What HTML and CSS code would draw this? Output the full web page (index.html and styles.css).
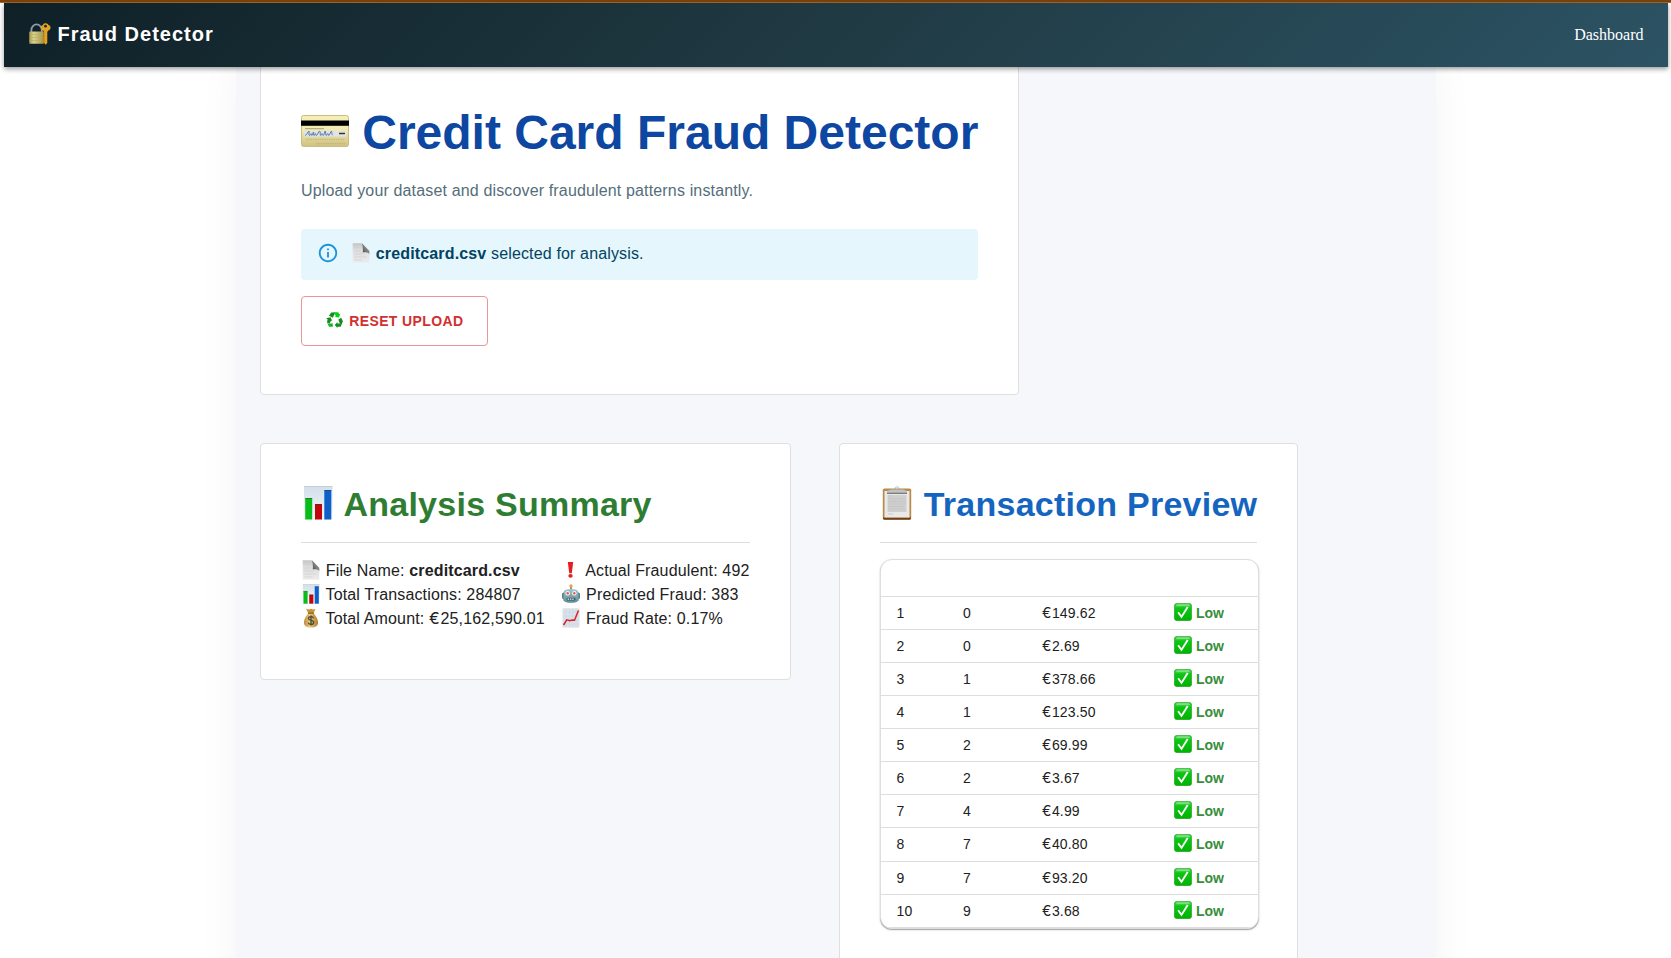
FILE: index.html
```html
<!DOCTYPE html>
<html lang="en">
<head>
<meta charset="utf-8">
<title>Fraud Detector</title>
<link rel="stylesheet" href="styles.css">
</head>
<body>
<svg class="defs" width="0" height="0" aria-hidden="true">
  <defs>
    <linearGradient id="brass" x1="0" x2="1" y1="0" y2="0"><stop offset="0" stop-color="#a69a4c"/><stop offset=".3" stop-color="#d9d28c"/><stop offset="1" stop-color="#a3944a"/></linearGradient>
    <linearGradient id="cream" x1="0" x2="0" y1="0" y2="1"><stop offset="0" stop-color="#f6f0b6"/><stop offset=".5" stop-color="#efe8b4"/><stop offset="1" stop-color="#cfc07c"/></linearGradient>
    <linearGradient id="sheet" x1="0" x2="0" y1="0" y2="1"><stop offset="0" stop-color="#c4c4c4"/><stop offset=".3" stop-color="#dcdcdc"/><stop offset="1" stop-color="#ececec"/></linearGradient>
    <linearGradient id="fold" x1="0" x2="1" y1="1" y2="0"><stop offset="0" stop-color="#444"/><stop offset="1" stop-color="#bbb"/></linearGradient>
    <linearGradient id="panel" x1="0" x2="0" y1="0" y2="1"><stop offset="0" stop-color="#d3dfea"/><stop offset="1" stop-color="#f4f7fa"/></linearGradient>
    <linearGradient id="tick" x1="0" x2="0" y1="0" y2="1"><stop offset="0" stop-color="#4bd84b"/><stop offset=".3" stop-color="#0cc414"/><stop offset="1" stop-color="#00b400"/></linearGradient>
    <linearGradient id="metal" x1="0" x2="0" y1="0" y2="1"><stop offset="0" stop-color="#9fc6d0"/><stop offset="1" stop-color="#5f8c98"/></linearGradient>
    <linearGradient id="sack" x1="0" x2="1" y1="0" y2="0"><stop offset="0" stop-color="#b98a3c"/><stop offset=".4" stop-color="#ecc878"/><stop offset="1" stop-color="#b07c2c"/></linearGradient>
  </defs>
  <symbol id="i-lock" viewBox="0 0 22 22">
    <path d="M2.400 9.500V7a5.200 5.600 0 0 1 10.400 0v2.500" fill="none" stroke="#8d9bab" stroke-width="1.800"/>
    <rect x=".3" y="8.600" width="14.500" height="12.200" rx=".6" fill="url(#brass)"/>
    <path d="M.3 11.500h14.500M.3 14.500h14.500M.3 17.500h14.500" stroke="#b5a962" stroke-width=".6"/>
    <path d="M16.500.3c1.700 0 2.500.7 3 1.700 1.500.4 2.200 1.500 2 3-.2 1.600-1.200 2.400-2.300 2.600l-.9 1.500v10.800l-1.600 1.800-1.600-1.600V9.100l-.9-1.500c-1.300-.2-2.200-1.100-2.300-2.600-.1-1.500.6-2.600 2-3 .4-1.100 1.200-1.700 2.600-1.700z" fill="#e5a220"/>
    <circle cx="16.500" cy="3.200" r="1.400" fill="#18292f"/>
    <path d="M15.200 14.600h-2v1.600h1v1.300h-1v2.200h2z" fill="#c98612"/>
  </symbol>
  <symbol id="i-card" viewBox="0 0 48 32">
    <rect x=".5" y=".5" width="47" height="31" rx="2" fill="url(#cream)" stroke="#c9bd87"/>
    <rect x="0" y="5.500" width="48" height="5.300" fill="#000"/>
    <path d="M4 13.700h19" stroke="#aaa277" stroke-width="1"/>
    <rect x="3" y="16" width="42" height="5.500" fill="#e2e4e4"/>
    <path d="M4 20.500c2-.5 3.200-4.500 4-4.500s-.8 4.500.3 4.500 1-2 1.700-2 .2 2 1 2 .8-3.500 1.500-3.500-.3 3.500.5 3.500 1-2 1.500-2 0 2 1 2 2-4.500 3-4.500.5 4.500 1.200 4.500.6-2 1.300-2 .5 2 1.300 2 1.400-4.500 2-4.500 0 4.500.8 4.500 1.200-2 1.800-2 .2 2 1 2 1.500-4 2.400-4.300 .2 3.500 1.200 4" fill="none" stroke="#4f79ba" stroke-width="1"/>
    <path d="M38 18.500h6" stroke="#333" stroke-width="1.500"/>
    <path d="M5 24.500h39M15 28.500h30" stroke="#b8ab78" stroke-width="1.600" stroke-dasharray="1.500 .8" opacity=".6"/>
  </symbol>
  <symbol id="i-doc" viewBox="0 0 20 20">
    <path d="M1.700.3h9.200l7.400 8.500v11H1.700z" fill="url(#sheet)"/>
    <path d="M10.900.3l7.400 7.400v3.200c-1.700-1.500-4.300-1.800-6.500-1.400.4-3-.1-6.500-.9-9.200z" fill="url(#fold)"/>
    <path d="M3.500 5h6M3.500 8h6M3.500 11h9M3.500 14h12M3.500 17h8" stroke="#cfcfcf" stroke-width=".7"/>
  </symbol>
  <symbol id="i-info" viewBox="0 0 24 24">
    <path fill="#1b95d8" d="M11 7h2v2h-2zm0 4h2v6h-2zm1-9C6.480 2 2 6.480 2 12s4.480 10 10 10 10-4.480 10-10S17.520 2 12 2zm0 18c-4.410 0-8-3.590-8-8s3.590-8 8-8 8 3.590 8 8-3.590 8-8 8z"/>
  </symbol>
  <symbol id="i-recycle" viewBox="0 0 17 16">
    <path d="M3 3.800L5.200.5h4L6.900 5.800z" fill="#168a20"/><path d="M6.800.3h5.400l1.100 1.900 1.100-.4-1.500 3.700-4.300-.5 1.300-.8L8.600 1.700z" fill="#07cf12"/>
    <path d="M12.300 7.400l3-1.600 1.500 3.400-1.200 2.600h-1.700z" fill="#168a20"/><path d="M16.500 10.200l-1.800 4.600h-3.300v1.200L8.800 13l2.600-3v1.400h3z" fill="#138f1d"/>
    <path d="M.2 6.200l4.300-.9 1.800 3.800-1.200-.5-1.600 3L1 10.500l.6-3.300z" fill="#168a20"/><path d="M.5 9l1.600 2.500h4.700v3.300H3z" fill="#10b91a"/>
  </symbol>
  <symbol id="i-bars" viewBox="0 0 34 34">
    <rect x="3" y=".2" width="28.500" height="33.500" fill="url(#panel)"/>
    <path d="M3 .4h28.500" stroke="#b9c5ce" stroke-width=".8"/>
    <path d="M4.200 12h7v21.500h-7z" fill="#08bd18"/><path d="M14 18h7v15.500h-7z" fill="#c2060c"/><path d="M23.300 4h7v29.500h-7z" fill="#0c60c8"/>
    <path d="M4.200 12.500h7M14 18.500h7M23.300 4.500h7" stroke="#333" stroke-opacity=".45"/>
  </symbol>
  <symbol id="i-money" viewBox="0 0 20 20">
    <path d="M5 .8l3 .8 2-.8 2 .8 2.500-.6-2 4.300H7.300z" fill="#c99338"/>
    <path d="M7.300 5.200h5.400c1.500 2 4.400 5.500 4.400 9.300 0 3.500-2.500 5-7.100 5s-7-1.500-7-5c0-3.800 2.800-7.300 4.300-9.300z" fill="url(#sack)"/>
    <path d="M7 5.200h6" stroke="#8d5b17" stroke-width="1.200"/>
    <path d="M12.600 10.200c-.4-1.200-1.300-1.500-2.600-1.500-1.500 0-2.500.6-2.500 1.800 0 2.700 5.200 1.100 5.200 3.900 0 1.300-1.200 1.900-2.700 1.900s-2.500-.5-2.800-1.700M10 7.500v10" fill="none" stroke="#454a3e" stroke-width="1.300"/>
  </symbol>
  <symbol id="i-bang" viewBox="0 0 20 20"><path d="M6.800 2h5.400l-1.400 11.200H8.200z" fill="#e81c20"/><ellipse cx="9.500" cy="15.900" rx="2.200" ry="1.800" fill="#e81c20"/></symbol>
  <symbol id="i-robot" viewBox="0 0 20 20">
    <path d="M9.200 2.500h1.600V5H9.200z" fill="#777"/><circle cx="10" cy="1.900" r="1.700" fill="#f0a434"/>
    <rect x="1" y="8.500" width="18" height="6.500" rx="1.500" fill="#637d86"/>
    <path d="M3 7c2-2.800 12-2.800 14 0l.8 9c-1.500 3.800-14 3.800-15.600 0z" fill="url(#metal)"/>
    <circle cx="6.700" cy="9.300" r="2.200" fill="#f6fafa"/><circle cx="13.300" cy="9.300" r="2.200" fill="#f6fafa"/>
    <circle cx="6.700" cy="9.300" r="1.200" fill="#e35550"/><circle cx="13.300" cy="9.300" r="1.200" fill="#e35550"/>
    <path d="M10 10.500l1 2H9z" fill="#c85"/><rect x="5.500" y="13.700" width="9" height="2.800" rx="1.200" fill="#385a66"/>
    <path d="M6.600 15.100h6.800" stroke="#e8f2f2" stroke-width="1.300" stroke-dasharray="1.500 .8"/>
  </symbol>
  <symbol id="i-trend" viewBox="0 0 20 20">
    <rect x="1.500" y=".3" width="17" height="19.300" fill="#dbe3ea"/>
    <path d="M4.900.3v19.300M8.300.3v19.300M11.700.3v19.300M15.100.3v19.300M1.500 4h17M1.500 8h17M1.500 12h17M1.500 16h17" stroke="#c3ced8" stroke-width=".4"/>
    <path d="M2.500 17l3.300-5.200 3 1 2.500-.8 2.200.3 4-9.800" fill="none" stroke="#d8232a" stroke-width="1.500"/>
  </symbol>
  <symbol id="i-clip" viewBox="0 0 34 34">
    <circle cx="17" cy="2.800" r="2" fill="none" stroke="#b5bfc8"/>
    <rect x="2.800" y="2.500" width="28.400" height="31" rx="1.800" fill="#b98a48"/><path d="M3 31.500h28v.8a1.500 1.500 0 0 1-1.500 1.500h-25A1.500 1.500 0 0 1 3 32.300z" fill="#724118"/>
    <path d="M4.500 5h25v26.500h-25z" fill="#e9e9e9"/><path d="M7.500 9h19v17h-19z" fill="#cfcfcf"/><path d="M8 10h4M8 13h17M8 15.500h18M8 18h18M8 20.500h16M8 23h17M8 28h5" stroke="#c2c2c2" stroke-width=".7"/>
    <path d="M7 5l4-1.500h12L27 5v2.500H7z" fill="#b9c3cc"/><path d="M7 7.300h20" stroke="#6d6250"/>
  </symbol>
  <symbol id="i-check" viewBox="0 0 18 18">
    <rect x=".3" y=".3" width="17.400" height="17.400" rx="3" fill="url(#tick)" stroke="#2a9b2c" stroke-width=".6"/>
    <path d="M2 3.200Q2 1.200 4 1.200h10q2 0 2 2z" fill="#fff" opacity=".35"/>
    <path d="M4.100 9.300l3.400 4.600L13.700 4" fill="none" stroke="#fff" stroke-width="1.900"/>
  </symbol>
</svg>

<div class="top-strip"></div>
<nav class="navbar">
  <div class="brand"><svg class="ic-lock"><use href="#i-lock"/></svg>Fraud Detector</div>
  <a class="nav-link">Dashboard</a>
</nav>

<main class="container">
  <section class="card upload">
    <h1><svg class="ic-card"><use href="#i-card"/></svg> Credit Card Fraud Detector</h1>
    <p class="subtitle">Upload your dataset and discover fraudulent patterns instantly.</p>
    <div class="alert"><svg class="ic-info"><use href="#i-info"/></svg><span class="message"><svg class="ic"><use href="#i-doc"/></svg> <b>creditcard.csv</b> selected for analysis.</span></div>
    <button class="reset"><svg class="ic-recycle"><use href="#i-recycle"/></svg> RESET UPLOAD</button>
  </section>

  <div class="panels">
    <section class="card summary">
      <h2 class="green"><svg class="ic-h"><use href="#i-bars"/></svg> Analysis Summary</h2>
      <hr>
      <div class="stats">
        <div>
          <p><svg class="ic"><use href="#i-doc"/></svg> File Name: <b>creditcard.csv</b></p>
          <p><svg class="ic"><use href="#i-bars"/></svg> Total Transactions: 284807</p>
          <p><svg class="ic"><use href="#i-money"/></svg> Total Amount: <span class="euro">€</span>25,162,590.01</p>
        </div>
        <div>
          <p><svg class="ic"><use href="#i-bang"/></svg> Actual Fraudulent: 492</p>
          <p><svg class="ic"><use href="#i-robot"/></svg> Predicted Fraud: 383</p>
          <p><svg class="ic"><use href="#i-trend"/></svg> Fraud Rate: 0.17%</p>
        </div>
      </div>
    </section>

    <section class="card preview">
      <h2 class="blue"><svg class="ic-h"><use href="#i-clip"/></svg> Transaction Preview</h2>
      <hr>
      <div class="table">
        <div class="thead"></div>
        <div class="row"><span>1</span><span>0</span><span><span class="euro">€</span>149.62</span><span class="low"><svg class="ic-check"><use href="#i-check"/></svg>Low</span></div>
        <div class="row"><span>2</span><span>0</span><span><span class="euro">€</span>2.69</span><span class="low"><svg class="ic-check"><use href="#i-check"/></svg>Low</span></div>
        <div class="row"><span>3</span><span>1</span><span><span class="euro">€</span>378.66</span><span class="low"><svg class="ic-check"><use href="#i-check"/></svg>Low</span></div>
        <div class="row"><span>4</span><span>1</span><span><span class="euro">€</span>123.50</span><span class="low"><svg class="ic-check"><use href="#i-check"/></svg>Low</span></div>
        <div class="row"><span>5</span><span>2</span><span><span class="euro">€</span>69.99</span><span class="low"><svg class="ic-check"><use href="#i-check"/></svg>Low</span></div>
        <div class="row"><span>6</span><span>2</span><span><span class="euro">€</span>3.67</span><span class="low"><svg class="ic-check"><use href="#i-check"/></svg>Low</span></div>
        <div class="row"><span>7</span><span>4</span><span><span class="euro">€</span>4.99</span><span class="low"><svg class="ic-check"><use href="#i-check"/></svg>Low</span></div>
        <div class="row tall"><span>8</span><span>7</span><span><span class="euro">€</span>40.80</span><span class="low"><svg class="ic-check"><use href="#i-check"/></svg>Low</span></div>
        <div class="row"><span>9</span><span>7</span><span><span class="euro">€</span>93.20</span><span class="low"><svg class="ic-check"><use href="#i-check"/></svg>Low</span></div>
        <div class="row"><span>10</span><span>9</span><span><span class="euro">€</span>3.68</span><span class="low"><svg class="ic-check"><use href="#i-check"/></svg>Low</span></div>
      </div>
    </section>
  </div>
</main>
</body>
</html>
```
FILE: styles.css
```css
* { box-sizing: border-box; }
html, body { height: 100%; }
body {
  margin: 0;
  overflow: hidden;
  display: flex;
  flex-direction: column;
  background: #fff;
  color: #212121;
  font: 16px/24px "Liberation Sans", Arial, sans-serif;
  letter-spacing: .15px;
}
h1, h2, p { margin: 0; }
svg { display: inline-block; flex: none; overflow: visible; }
.defs { position: absolute; }

.top-strip { flex: none; height: 3px; background: #7c430a; border-bottom: 1px solid #a56b32; }
.navbar {
  flex: none;
  position: relative;
  z-index: 2;
  height: 64px;
  margin: 0 3.500px 0 4px;
  padding: 0 24px;
  display: flex;
  align-items: center;
  justify-content: space-between;
  background: linear-gradient(135deg, #0f2027, #203a43 50%, #2c5364);
  box-shadow: 0 2px 5px rgba(0, 0, 0, .4);
  color: #fff;
}
.brand { display: flex; align-items: center; gap: 7px; font-size: 20px; font-weight: 700; letter-spacing: 1px; padding-bottom: 2px; }
.ic-lock { width: 22px; height: 22px; margin: -1px 0 0 .5px; }
.nav-link { font: 16px/20px "Liberation Serif", "Times New Roman", serif; letter-spacing: 0; color: #fff; }

.container {
  flex: none;
  width: 1200px;
  height: 1000px;
  margin: -3px auto 0;
  padding: 0 24px;
  background: #f5f7fb;
  box-shadow: 0 0 40px rgba(0, 0, 0, .05);
}
.card { background: #fff; border: 1px solid #dfdfdf; border-radius: 4px; padding: 40px; }

.upload { width: 759px; height: 331px; }
h1 { font-size: 48px; line-height: 56px; font-weight: 700; letter-spacing: 0; color: #0d47a1; white-space: nowrap; }
.ic-card { width: 48px; height: 32px; margin-right: .4px; vertical-align: 2px; }
.subtitle { margin-top: 18px; padding-left: .5px; color: #546e7a; }
.alert {
  margin: 26px 0 16px;
  width: 677px;
  height: 51px;
  padding: 0 16px;
  display: flex;
  align-items: center;
  gap: 12px;
  border-radius: 4px;
  background: #e5f6fd;
  color: #014361;
}
.ic-info { width: 22px; height: 22px; margin-top: -3px; }
.message { padding-bottom: 2px; }
.ic { width: 20px; height: 20px; margin-right: .7px; vertical-align: -4px; }
.euro { font-family: Inter, "Liberation Sans", sans-serif; line-height: 1; letter-spacing: .8px; }
.reset {
  display: block;
  width: 187px;
  height: 50px;
  padding: 0 0 0 2px;
  border: 1px solid #ea9696;
  border-radius: 4px;
  background: #fff;
  color: #d32f2f;
  font: 700 14px/24px "Liberation Sans", Arial, sans-serif;
  letter-spacing: .4px;
  white-space: nowrap;
}
.ic-recycle { width: 17px; height: 16px; margin-right: 1.500px; vertical-align: -2px; }

.panels { display: flex; align-items: flex-start; gap: 48px; margin-top: 48px; }
h2 { height: 42px; font-size: 34px; line-height: 40px; font-weight: 700; letter-spacing: .25px; white-space: nowrap; }
.ic-h { width: 34px; height: 34px; margin-right: .5px; vertical-align: -4px; }
.green { color: #2e7d32; }
.blue { color: #1565c0; }
hr { height: 1px; margin: 16px 0; border: 0; background: #dedede; }
.summary { width: 531px; height: 237px; }
.stats { display: flex; gap: 16px; white-space: nowrap; }
.stats > :first-child { width: 244.500px; }

.preview { width: 459px; height: 560px; }
.table {
  width: 379px;
  margin-right: -2px;
  height: 370px;
  border: 1px solid #dedede;
  border-radius: 12px;
  overflow: hidden;
  background: #fff;
  box-shadow: 0 1px 1px rgba(0, 0, 0, .3), 0 1px 3px rgba(0, 0, 0, .1);
}
.thead { height: 37px; border-bottom: 1px solid #dedede; }
.row {
  display: grid;
  grid-template-columns: 66.500px 79px 131.500px 1fr;
  align-items: center;
  height: 33px;
  padding-left: 16px;
  border-bottom: 1px solid #dedede;
  font-size: 14px;
  line-height: 20px;
}
.row.tall { height: 34px; padding-bottom: 1px; }
.row .euro { letter-spacing: .6px; }
.low { display: flex; align-items: center; gap: 4.500px; color: #388e3c; font-weight: 700; letter-spacing: 0; }
.ic-check { width: 18px; height: 18px; margin-top: -2px; }
```
